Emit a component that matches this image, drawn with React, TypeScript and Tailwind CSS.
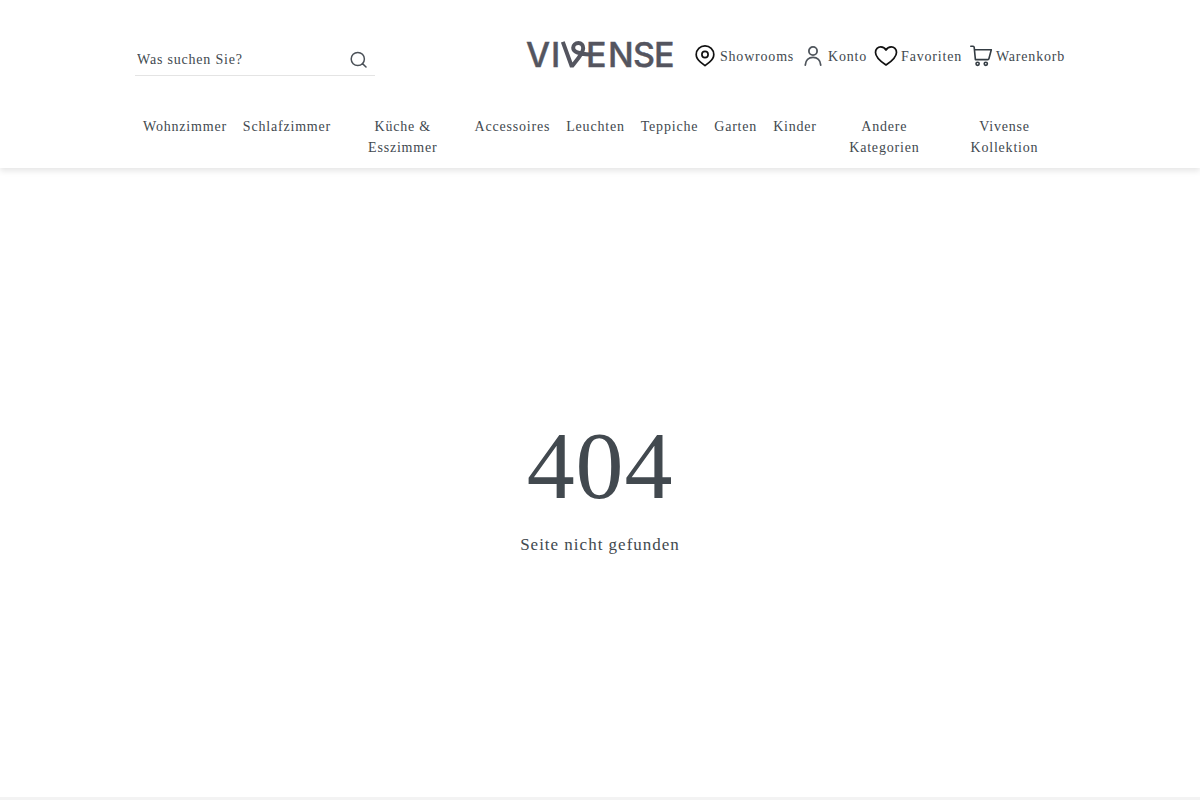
import type { ReactNode } from "react";

type HeaderLink = {
  label: string;
  icon: ReactNode;
};

const categories = [
  "Wohnzimmer",
  "Schlafzimmer",
  "Küche & Esszimmer",
  "Accessoires",
  "Leuchten",
  "Teppiche",
  "Garten",
  "Kinder",
  "Andere Kategorien",
  "Vivense Kollektion",
];

const iconProps = {
  width: 22,
  height: 22,
  viewBox: "0 0 22 22",
  fill: "none",
  strokeLinecap: "round",
  strokeLinejoin: "round",
  overflow: "visible",
  "aria-hidden": true,
} as const;

const headerLinks: HeaderLink[] = [
  {
    label: "Showrooms",
    icon: (
      <svg {...iconProps} stroke="#111" strokeWidth="1.7">
        <path d="M11 20.700 6.500 17.100C3.800 15 2.200 12.500 2.200 9.600a8.800 8.700 0 0 1 17.600 0c0 2.900-1.600 5.400-4.300 7.500Z" />
        <circle cx="11" cy="9.500" r="3.100" />
      </svg>
    ),
  },
  {
    label: "Konto",
    icon: (
      <svg {...iconProps} stroke="#4f555c" strokeWidth="1.8">
        <circle cx="11" cy="6" r="4.100" />
        <path d="M3.300 20c.3-4.700 3.400-7.600 7.700-7.600s7.400 2.900 7.700 7.600" />
      </svg>
    ),
  },
  {
    label: "Favoriten",
    icon: (
      <svg {...iconProps} stroke="#111" strokeWidth="1.7">
        <path d="M11 20C8.400 18.200.5 13 .5 7.400.5 4.200 2.900 1.900 5.700 1.900c2.200 0 4.200 1.100 5.300 3.200 1.100-2.100 3.100-3.200 5.300-3.200 2.800 0 5.200 2.300 5.200 5.500C21.500 13 13.600 18.200 11 20Z" />
      </svg>
    ),
  },
  {
    label: "Warenkorb",
    icon: (
      <svg {...iconProps} stroke="#343c43" strokeWidth="1.6">
        <path d="M.8 1.300h2.300c.7 0 1 .4 1.100 1l1.200 12.300h12.400c.6 0 1-.3 1.100-.9l2.400-8.900H4.500" />
        <circle cx="7.600" cy="18.800" r="1.600" />
        <circle cx="15.800" cy="18.800" r="1.600" />
      </svg>
    ),
  },
];

function Logo() {
  return (
    <svg width="148" height="30" viewBox="0 0 148 30" overflow="visible" role="img" aria-label="Vivense">
      <text
        x="0 25 60 82 107 128"
        y="27"
        fill="#54555f"
        stroke="#54555f"
        strokeWidth=".4"
        fontFamily="Inter, sans-serif"
        fontSize="34"
        fontWeight="500"
        letterSpacing="0"
      >
        VIENSE
      </text>
      {/* Looped stroke that runs into the E */}
      <path
        d="M36.800 1.900 45.400 25.500h1.100C50 21 57.200 13.500 57.200 8.200c0-3.400-2-5.200-4.800-5.200-3 0-5.200 2-5.200 4.800 0 3.900 4.600 5.900 16.800 6.700"
        fill="none"
        stroke="#54555f"
        strokeWidth="4"
      />
    </svg>
  );
}

function SearchForm() {
  return (
    <form
      role="search"
      className="mt-1 flex h-8 w-60 items-center border-b border-[#e4e4e4]"
      onSubmit={(e) => e.preventDefault()}
    >
      <input
        type="search"
        aria-label="Was suchen Sie?"
        placeholder="Was suchen Sie?"
        className="min-w-0 flex-1 bg-transparent px-0.5 tracking-[inherit] outline-none placeholder:text-[#42494f]"
      />
      <button type="submit" aria-label="Suchen" className="mr-2">
        <svg
          width="17"
          height="17"
          viewBox="0 0 17 17"
          fill="none"
          stroke="#4b5158"
          strokeWidth="1.500"
          strokeLinecap="round"
          aria-hidden="true"
        >
          <circle cx="7.800" cy="8" r="6.600" />
          <path d="m12.500 12.600 3.500 3.400" />
        </svg>
      </button>
    </form>
  );
}

export default function App() {
  return (
    <div className="flex min-h-screen flex-col bg-white font-['Liberation_Serif',serif] text-base tracking-wider text-[#42494f]">
      <header className="pb-[10px] text-[14px] leading-[21px] shadow-[0_3px_6px_rgba(0,0,0,0.1)]">
        <div className="mx-auto w-full max-w-[960px] px-[15px]">
          <div className="grid grid-cols-[1fr_auto_1fr] items-start pt-10">
            <SearchForm />
            <a href="#">
              <Logo />
            </a>
            <div className="flex h-8 items-center justify-end gap-2">
              {headerLinks.map(({ label, icon }) => (
                <a key={label} href="#" className="flex items-center gap-1">
                  {icon}
                  <span>{label}</span>
                </a>
              ))}
            </div>
          </div>

          <nav className="mt-10" aria-label="Kategorien">
            <ul className="flex justify-between text-center">
              {categories.map((category) => (
                <li key={category}>
                  <a href="#" className="block px-2">
                    {category}
                  </a>
                </li>
              ))}
            </ul>
          </nav>
        </div>
      </header>

      <main className="flex flex-1 flex-col items-center justify-center gap-4 pt-3">
        <h1 className="text-[96px] leading-[96px]">404</h1>
        <p className="text-[17px] leading-[30px] tracking-[1px]">Seite nicht gefunden</p>
      </main>

      <footer className="h-[3px] bg-[#f3f3f3]" />
    </div>
  );
}
